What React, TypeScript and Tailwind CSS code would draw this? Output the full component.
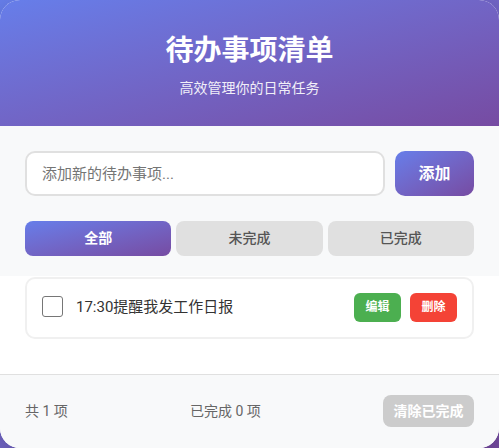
import React from "react";

export default function App() {
  const font = { fontFamily: 'Roboto, "Noto Sans CJK SC", sans-serif' };
  return (
    <div
      className="min-h-[448px] w-full bg-gradient-to-br from-[#667eea] to-[#764ba2]"
      style={font}
    >
      <div className="w-full rounded-[20px] overflow-hidden bg-white shadow-[0_10px_30px_rgba(0,0,0,0.2)]">
        {/* Header */}
        <div className="bg-gradient-to-br from-[#667eea] to-[#764ba2] text-white text-center pt-[31px] pb-[28px]">
          <h1 className="text-[28px] leading-[40px] font-bold m-0">待办事项清单</h1>
          <p className="text-[14px] leading-[20px] mt-[7px] opacity-90">高效管理你的日常任务</p>
        </div>

        {/* Input section */}
        <div className="bg-[#f8f9fa] px-[25px] pt-[25px] pb-[20px]">
          <div className="flex gap-[10px]">
            <input
              type="text"
              placeholder="添加新的待办事项..."
              className="flex-1 h-[45px] px-[15px] border-2 border-[#e0e0e0] rounded-[10px] bg-white text-[15px] outline-none placeholder:text-[#757575]"
              style={font}
            />
            <button className="w-[79px] h-[45px] rounded-[10px] bg-gradient-to-br from-[#667eea] to-[#764ba2] text-white text-[16px] font-bold">
              添加
            </button>
          </div>
          <div className="flex gap-[5px] mt-[25px]">
            <button className="flex-1 h-[35px] rounded-[8px] bg-gradient-to-br from-[#667eea] to-[#764ba2] text-white text-[14px] font-bold">
              全部
            </button>
            <button className="flex-1 h-[35px] rounded-[8px] bg-[#e0e0e0] text-[#555] text-[14px] font-medium">
              未完成
            </button>
            <button className="flex-1 h-[35px] rounded-[8px] bg-[#e0e0e0] text-[#555] text-[14px] font-medium">
              已完成
            </button>
          </div>
        </div>

        {/* List */}
        <div className="bg-white px-[25px] pt-[1px] h-[98px]">
          <div className="flex items-center h-[62px] border-2 border-[#f0f0f0] rounded-[10px] px-[15px]">
            <span className="w-[21px] h-[21px] border border-[#767676] rounded-[3px] bg-white shrink-0 -mt-[3px]" />
            <span className="ml-[13px] flex-1 text-[15px] text-[#333] -mt-[2px]">17:30提醒我发工作日报</span>
            <div className="flex gap-[9px] -mt-[2px]">
              <button className="w-[47px] h-[29px] rounded-[6px] bg-[#4caf50] text-white text-[12px] font-bold">
                编辑
              </button>
              <button className="w-[47px] h-[29px] rounded-[6px] bg-[#f44336] text-white text-[12px] font-bold">
                删除
              </button>
            </div>
          </div>
        </div>

        {/* Footer */}
        <div className="bg-[#f8f9fa] border-t border-[#e0e0e0] px-[25px] pt-[20px] pb-[21px] flex items-center justify-between">
          <span className="text-[14px] text-[#666]">共 1 项</span>
          <span className="text-[14px] text-[#666]">已完成 0 项</span>
          <button className="w-[91px] h-[32px] rounded-[8px] bg-[#cccccc] text-white text-[14px] font-bold">
            清除已完成
          </button>
        </div>
      </div>
    </div>
  );
}
